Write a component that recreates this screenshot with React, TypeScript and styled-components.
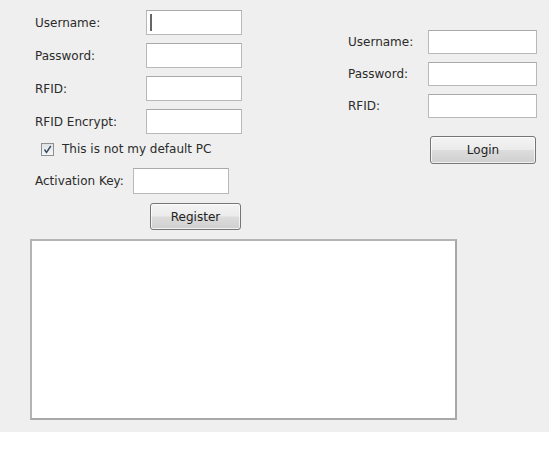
import styled, { createGlobalStyle } from "styled-components";

const GlobalStyle = createGlobalStyle`
  html, body {
    margin: 0;
    padding: 0;
    background: #ffffff;
  }
  body {
    font-family: "DejaVu Sans", Verdana, sans-serif;
    font-size: 12px;
    color: #2b2b2b;
  }
`;

const Window = styled.div`
  width: 549px;
  height: 432px;
  background: #efefef;
  box-sizing: border-box;
  display: flex;
  flex-direction: column;
`;

const Top = styled.div`
  display: flex;
  align-items: flex-start;
`;

const LeftColumn = styled.div`
  width: 313px;
  box-sizing: border-box;
  padding: 10px 0 0 35px;
  display: flex;
  flex-direction: column;
  align-items: flex-start;
`;

const RightColumn = styled.div`
  padding: 30px 0 0 35px;
  display: flex;
  flex-direction: column;
  align-items: flex-start;
`;

const FieldGrid = styled.div<{ $label: number; $input: number; $row: number }>`
  display: grid;
  grid-template-columns: ${(p) => p.$label}px ${(p) => p.$input}px;
  grid-auto-rows: ${(p) => p.$row}px;
  row-gap: 8px;
  align-items: center;
`;

const Label = styled.label`
  white-space: nowrap;
`;

const InputBox = styled.div`
  position: relative;
  height: 100%;
`;

const TextInput = styled.input`
  box-sizing: border-box;
  width: 100%;
  height: 100%;
  margin: 0;
  padding: 0 4px;
  border: 1px solid #b9b9b9;
  border-top-color: #a9a9a9;
  background: #ffffff;
  font: inherit;
  outline: none;
`;

const Caret = styled.span`
  position: absolute;
  left: 4px;
  top: 4px;
  bottom: 4px;
  width: 2px;
  background: #666666;
`;

const CheckRow = styled.label`
  margin: 7px 0 0 6px;
  height: 16px;
  display: flex;
  align-items: center;
  gap: 8px;
`;

const CheckBox = styled.span`
  width: 13px;
  height: 13px;
  box-sizing: border-box;
  border: 1px solid #8e8f8f;
  background: linear-gradient(180deg, #dfe3e8 0%, #f4f6f8 100%);
  display: flex;
  align-items: center;
  justify-content: center;
`;

const KeyRow = styled.div`
  margin-top: 11px;
  display: flex;
  align-items: center;
  height: 26px;
`;

const KeyLabel = styled(Label)`
  width: 98px;
`;

const KeyInput = styled(TextInput)`
  width: 96px;
`;

const Button = styled.button<{ $w: number; $h: number }>`
  width: ${(p) => p.$w}px;
  height: ${(p) => p.$h}px;
  box-sizing: border-box;
  border: 1px solid #767676;
  border-radius: 3px;
  background: linear-gradient(
    180deg,
    #f4f4f4 0%,
    #ebebeb 48%,
    #dcdcdc 52%,
    #cfcfcf 100%
  );
  box-shadow: inset 0 0 0 1px rgba(255, 255, 255, 0.7);
  font: inherit;
  color: #222222;
  padding: 0;
`;

const RegisterButton = styled(Button)`
  margin: 9px 0 0 115px;
`;

const LoginButton = styled(Button)`
  margin: 18px 0 0 82px;
`;

const LogBox = styled.textarea`
  margin: 9px 0 0 30px;
  width: 427px;
  height: 181px;
  box-sizing: border-box;
  border: 2px solid #b4b4b4;
  border-right-color: #a8a8a8;
  border-bottom-color: #a8a8a8;
  background: #ffffff;
  resize: none;
  outline: none;
  font: inherit;
`;

const Check = () => (
  <svg width="9" height="9" viewBox="0 0 9 9">
    <path d="M1.5 4.5 L3.5 7.5 L7.8 1" fill="none" stroke="#3a4a5c" strokeWidth="1.4" />
  </svg>
);

export default function App() {
  return (
    <>
      <GlobalStyle />
      <Window>
        <Top>
          <LeftColumn>
            <FieldGrid $label={111} $input={96} $row={25}>
              <Label>Username:</Label>
              <InputBox>
                <TextInput />
                <Caret />
              </InputBox>
              <Label>Password:</Label>
              <TextInput type="password" />
              <Label>RFID:</Label>
              <TextInput />
              <Label>RFID Encrypt:</Label>
              <TextInput />
            </FieldGrid>
            <CheckRow>
              <CheckBox>
                <Check />
              </CheckBox>
              This is not my default PC
            </CheckRow>
            <KeyRow>
              <KeyLabel>Activation Key:</KeyLabel>
              <KeyInput />
            </KeyRow>
            <RegisterButton $w={91} $h={27}>Register</RegisterButton>
          </LeftColumn>
          <RightColumn>
            <FieldGrid $label={80} $input={109} $row={24}>
              <Label>Username:</Label>
              <TextInput />
              <Label>Password:</Label>
              <TextInput type="password" />
              <Label>RFID:</Label>
              <TextInput />
            </FieldGrid>
            <LoginButton $w={106} $h={28}>Login</LoginButton>
          </RightColumn>
        </Top>
        <LogBox />
      </Window>
    </>
  );
}
